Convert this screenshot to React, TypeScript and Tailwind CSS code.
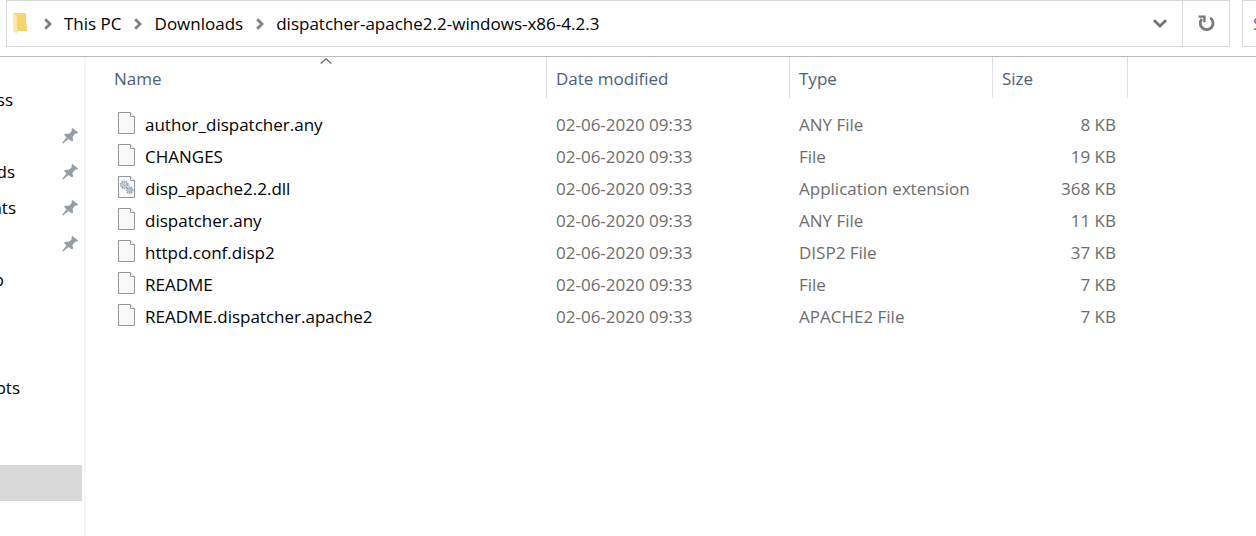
import { Fragment } from 'react';

const places = [
  { label: 'ss', box: 'w-[13px]', pinned: false },
  { label: '', box: 'w-0', pinned: true },
  { label: 'ds', box: 'w-[15px]', pinned: true },
  { label: 'nts', box: 'w-4', pinned: true },
  { label: '', box: 'w-0', pinned: true },
  { label: 'p', box: 'w-1', pinned: false },
  { label: '', box: 'w-0', pinned: false },
  { label: '', box: 'w-0', pinned: false },
  { label: 'pts', box: 'w-5', pinned: false },
];

const path = ['This PC', 'Downloads', 'dispatcher-apache2.2-windows-x86-4.2.3'];

const files = [
  { name: 'author_dispatcher.any', type: 'ANY File', size: '8 KB' },
  { name: 'CHANGES', type: 'File', size: '19 KB' },
  { name: 'disp_apache2.2.dll', type: 'Application extension', size: '368 KB', gears: true },
  { name: 'dispatcher.any', type: 'ANY File', size: '11 KB' },
  { name: 'httpd.conf.disp2', type: 'DISP2 File', size: '37 KB' },
  { name: 'README', type: 'File', size: '7 KB' },
  { name: 'README.dispatcher.apache2', type: 'APACHE2 File', size: '7 KB' },
];

function Folder() {
  return (
    <svg className="mr-[3px] h-[21px] w-[15px] shrink-0" viewBox="0 0 15 21" aria-hidden="true">
      <path d="M0 0h13v11l1 1v6H4z" fill="#f8d775" />
      <path d="M5 1h8v11l1 1v5H5z" fill="#f6d36c" />
      <path d="M0 0l4 3v18l-4-3z" fill="#fde9a6" />
    </svg>
  );
}

function Crumb() {
  return (
    <svg className="h-3 w-2 shrink-0" viewBox="0 0 8 12" fill="none" stroke="#808080" strokeWidth="2.8" aria-hidden="true">
      <path d="M1.200 1.300L6 6l-4.800 4.700" />
    </svg>
  );
}

function Pin() {
  return (
    <svg className="h-4 w-4 shrink-0" viewBox="0 0 16 16" fill="#949ea6" aria-hidden="true">
      <path d="M10.300 0L16 4.300l-.7 1.300-2.300.1-2.500 3.200.6 3.300-1 1.200-3.500-2.500L1 15.500l-.9-.6 4.400-5.400L2 6.700l1.200-1 3.800.1L9.800 3 9.600.8z" />
    </svg>
  );
}

function FileIcon({ gears }: { gears?: boolean }) {
  return (
    <svg className="h-[22px] w-[17px] shrink-0" viewBox="0 0 17 22" aria-hidden="true">
      <path d="M.5.5h12l4 4v17H.5z" fill="#f8f9fa" stroke="#969696" />
      <path d="M12.500.5v4h4" fill="#fff" stroke="#969696" />
      {gears && (
        <g fill="none">
          <circle cx="6.300" cy="8.800" r="3.600" stroke="#929fa8" strokeWidth="1.600" strokeDasharray="1.400 .86" />
          <circle cx="6.300" cy="8.800" r="2.600" fill="#e3e8eb" stroke="#929fa8" strokeWidth=".8" />
          <circle cx="6.300" cy="8.800" r="1" stroke="#929fa8" strokeWidth=".8" />
          <circle cx="11.800" cy="14.200" r="3" stroke="#8fa5b2" strokeWidth="1.600" strokeDasharray="1.300 .79" />
          <circle cx="11.800" cy="14.200" r="2.100" fill="#dce8ef" stroke="#8fa5b2" strokeWidth="1" />
          <circle cx="11.800" cy="14.200" r=".8" stroke="#8fa5b2" strokeWidth=".8" />
        </g>
      )}
    </svg>
  );
}

function Heading({ label }: { label: string }) {
  return (
    <th scope="col" className="h-[41px] border-r border-[#e0e0e0] px-[9px] pt-[3px] pb-0 text-left font-normal text-[#4c607a]">
      <button type="button">{label}</button>
    </th>
  );
}

export default function App() {
  return (
    <div className="flex h-screen flex-col overflow-hidden bg-white font-['Open_Sans','Noto_Sans',sans-serif] text-[17px] leading-6 text-black">
      <header className="flex shrink-0 gap-3 border-b border-[#b9b9b9] pb-[9px] pl-1.5">
        <div className="flex h-[47px] min-w-0 grow border border-[#d9d9d9]">
          <nav aria-label="Path" className="flex min-w-0 grow items-center pl-1.5">
            <Folder />
            {path.map((part) => (
              <Fragment key={part}>
                <span className="flex w-[33px] shrink-0 justify-center">
                  <Crumb />
                </span>
                <button type="button" className="whitespace-nowrap">{part}</button>
              </Fragment>
            ))}
          </nav>
          <button type="button" aria-label="Recent locations" className="flex w-[45px] shrink-0 items-center justify-center">
            <svg className="h-[9px] w-3.5" viewBox="0 0 14 9" fill="none" stroke="#747474" strokeWidth="2.800" aria-hidden="true">
              <path d="M1 1.200l6 5.800 6-5.800" />
            </svg>
          </button>
          <button type="button" aria-label="Refresh" className="flex w-[47px] shrink-0 items-center justify-center border-l border-[#d9d9d9]">
            <svg className="h-[17px] w-[17px]" viewBox="0 0 17 17" fill="none" stroke="#7b7b7b" strokeWidth="2.800" aria-hidden="true">
              <path d="M12.200 2.900A6.400 6.400 0 1 1 3.900 3.900" />
              <path d="M.6 1.600h5.800v5.700" strokeWidth="2.400" />
            </svg>
          </button>
        </div>
        <input
          type="text"
          aria-label="Search"
          placeholder="S"
          className="h-[47px] w-3.5 shrink-0 border border-r-0 border-[#d9d9d9] pl-2.5 placeholder:text-[#6d6d6d]"
        />
      </header>

      <div className="flex min-h-0 grow">
        <nav aria-label="Places" className="w-[86px] shrink-0 overflow-hidden border-r-2 border-[#f5f5f5] pt-[25px]">
          <ul>
            {places.map((place, i) => (
              <li key={i} className="flex h-9 items-center justify-between pr-1.5">
                <a href="#" className={`flex justify-end ${place.box}`}>{place.label}</a>
                {place.pinned && <Pin />}
              </li>
            ))}
          </ul>
          <div className="mt-[59px] mr-0.5 h-9 bg-[#d9d9d9]" />
        </nav>

        <main className="min-w-0 grow">
          <table className="w-full table-fixed border-separate border-spacing-0">
            <colgroup>
              <col className="w-[461px]" />
              <col className="w-[243px]" />
              <col className="w-[203px]" />
              <col className="w-[135px]" />
              <col />
            </colgroup>
            <thead>
              <tr>
                <th
                  scope="col"
                  aria-sort="ascending"
                  className="relative h-[41px] border-r border-[#e0e0e0] pt-[3px] pb-0 pl-7 text-left font-normal text-[#4c607a]"
                >
                  <svg className="absolute top-px left-[234px] h-1.5 w-3" viewBox="0 0 12 6" fill="none" stroke="#5f5f5f" strokeWidth="1.200" aria-hidden="true">
                    <path d="M.7 5.500L6 .8l5.300 4.700" />
                  </svg>
                  <button type="button">Name</button>
                </th>
                <Heading label="Date modified" />
                <Heading label="Type" />
                <Heading label="Size" />
                <td />
              </tr>
            </thead>
            <tbody className="text-[#6d6d6d] before:block before:h-[11px]">
              {files.map((file) => (
                <tr key={file.name} className="h-8">
                  <td className="py-0 pl-8 text-black">
                    <span className="flex items-center gap-2.5">
                      <span className="shrink-0 pb-1">
                        <FileIcon gears={file.gears} />
                      </span>
                      {file.name}
                    </span>
                  </td>
                  <td className="py-0 pl-[9px]">02-06-2020 09:33</td>
                  <td className="py-0 pl-[9px]">{file.type}</td>
                  <td className="py-0 pr-3 text-right">{file.size}</td>
                  <td />
                </tr>
              ))}
            </tbody>
          </table>
        </main>
      </div>
    </div>
  );
}
